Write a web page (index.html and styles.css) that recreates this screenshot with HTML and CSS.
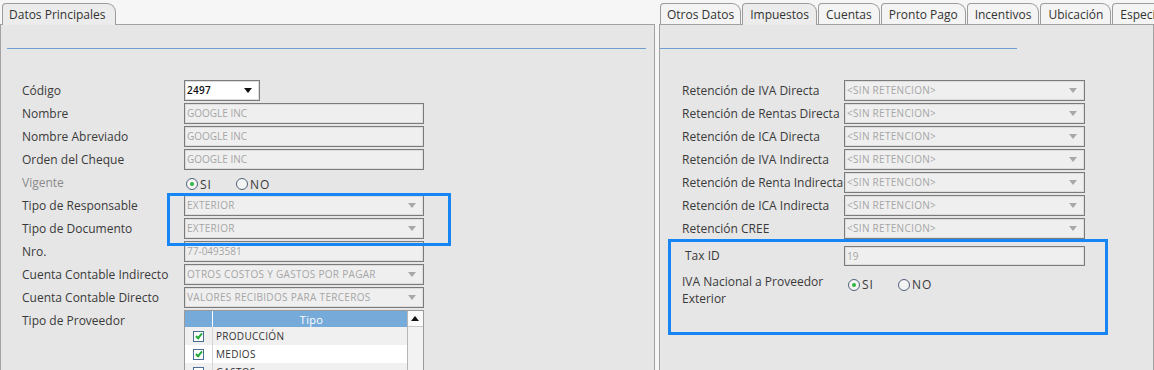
FILE: index.html
```html
<!DOCTYPE html>
<html lang="es">
<head>
  <meta charset="UTF-8">
  <title>Proveedor</title>
  <link rel="stylesheet" href="styles.css">
</head>
<body>
  <div class="window">

    <!-- Datos principales -->
    <div class="pane pane-left">
      <div class="tabs">
        <div class="tab active">Datos Principales</div>
      </div>
      <div class="panel">
        <div class="rule"></div>
        <div class="form">
          <label>Código</label>
          <div class="combo code"><span>2497</span><i class="arrow dark"></i></div>

          <label>Nombre</label>
          <div class="field">GOOGLE INC</div>

          <label>Nombre Abreviado</label>
          <div class="field">GOOGLE INC</div>

          <label>Orden del Cheque</label>
          <div class="field">GOOGLE INC</div>

          <label class="muted">Vigente</label>
          <div class="radios">
            <span class="radio checked"></span><span class="opt">SI</span>
            <span class="radio"></span><span class="opt">NO</span>
          </div>

          <label>Tipo de Responsable</label>
          <div class="combo"><span>EXTERIOR</span><i class="arrow"></i></div>

          <label>Tipo de Documento</label>
          <div class="combo"><span>EXTERIOR</span><i class="arrow"></i></div>

          <label>Nro.</label>
          <div class="field">77-0493581</div>

          <label>Cuenta Contable Indirecto</label>
          <div class="combo"><span>OTROS COSTOS Y GASTOS POR PAGAR</span><i class="arrow"></i></div>

          <label>Cuenta Contable Directo</label>
          <div class="combo"><span>VALORES RECIBIDOS PARA TERCEROS</span><i class="arrow"></i></div>

          <label class="top">Tipo de Proveedor</label>
          <div class="grid-table">
            <div class="table-body">
              <div class="trow head"><span class="chk-col"></span><span class="name-col">Tipo</span></div>
              <div class="trow"><span class="chk-col"><i class="check on"></i></span><span class="name-col">PRODUCCIÓN</span></div>
              <div class="trow alt"><span class="chk-col"><i class="check on"></i></span><span class="name-col">MEDIOS</span></div>
              <div class="trow"><span class="chk-col"><i class="check"></i></span><span class="name-col">GASTOS</span></div>
            </div>
            <div class="scrollbar"><span class="up"></span></div>
          </div>
        </div>
        <div class="mark mark-left"></div>
      </div>
    </div>

    <!-- Otros datos / Impuestos -->
    <div class="pane pane-right">
      <div class="tabs">
        <div class="tab">Otros Datos</div>
        <div class="tab active">Impuestos</div>
        <div class="tab">Cuentas</div>
        <div class="tab">Pronto Pago</div>
        <div class="tab">Incentivos</div>
        <div class="tab">Ubicación</div>
        <div class="tab">Especiales</div>
      </div>
      <div class="panel">
        <div class="rule short"></div>
        <div class="form tax">
          <label>Retención de IVA Directa</label>
          <div class="combo small"><span>&lt;SIN RETENCION&gt;</span><i class="arrow"></i></div>

          <label>Retención de Rentas Directa</label>
          <div class="combo small"><span>&lt;SIN RETENCION&gt;</span><i class="arrow"></i></div>

          <label>Retención de ICA Directa</label>
          <div class="combo small"><span>&lt;SIN RETENCION&gt;</span><i class="arrow"></i></div>

          <label>Retención de IVA Indirecta</label>
          <div class="combo small"><span>&lt;SIN RETENCION&gt;</span><i class="arrow"></i></div>

          <label>Retención de Renta Indirecta</label>
          <div class="combo small"><span>&lt;SIN RETENCION&gt;</span><i class="arrow"></i></div>

          <label>Retención de ICA Indirecta</label>
          <div class="combo small"><span>&lt;SIN RETENCION&gt;</span><i class="arrow"></i></div>

          <label>Retención CREE</label>
          <div class="combo small"><span>&lt;SIN RETENCION&gt;</span><i class="arrow"></i></div>
        </div>

        <div class="form tax extra">
          <label class="indent">Tax ID</label>
          <div class="field">19</div>

          <label class="top wrap">IVA Nacional a Proveedor Exterior</label>
          <div class="radios">
            <span class="radio checked"></span><span class="opt">SI</span>
            <span class="radio"></span><span class="opt">NO</span>
          </div>
        </div>
        <div class="mark mark-right"></div>
      </div>
    </div>

  </div>
</body>
</html>
```

FILE: styles.css
```css
html, body {
  margin: 0;
  height: 370px;
  overflow: hidden;
}
body {
  background: #f6f6f6;
  font-family: "Open Sans", "Noto Sans", sans-serif;
  font-size: 12px;
  color: #3a3a3a;
}
.window {
  display: flex;
  gap: 4px;
  height: 370px;
  overflow: hidden;
}
.pane {
  display: flex;
  flex-direction: column;
  overflow: hidden;
}
.pane-left {
  width: 655px;
  flex: none;
}
.pane-right {
  flex: 1;
  min-width: 0;
}

/* tabs */
.tabs {
  display: flex;
  height: 25px;
  padding-top: 3px;
  box-sizing: border-box;
  padding-left: 1px;
  white-space: nowrap;
  overflow: hidden;
  flex: none;
}
.pane-left .tabs {
  padding-left: 2px;
}
.tab {
  flex: none;
  padding: 0 7px;
  line-height: 21px;
  border: 1px solid #9c9c9c;
  border-bottom: none;
  border-radius: 4px 9px 0 0;
  background: #f4f4f4;
  color: #333;
  margin-right: 1px;
}
.tab:first-child {
  padding: 0 6px;
}
.tab.active {
  background: #ececec;
  position: relative;
  z-index: 1;
  height: 22px;
}
.pane-left .tab {
  width: 100px;
}

.panel {
  flex: 1;
  min-height: 0;
  position: relative;
  background: #e6e6e6;
  border: 1px solid #a2a2a2;
  border-bottom: none;
  margin-top: -1px;
  overflow: hidden;
}
.rule {
  height: 1px;
  background: #6e9fd0;
  margin: 23px 8px 0 6px;
}
.rule.short {
  width: 357px;
  margin-left: 0;
}

/* form grid */
.form {
  display: grid;
  grid-template-columns: 162px 240px;
  grid-auto-rows: 21px;
  row-gap: 2px;
  margin: 31px 0 0 21px;
  align-items: center;
}
.form label {
  align-self: center;
  white-space: nowrap;
}
.form label.top {
  align-self: start;
  padding-top: 2px;
}
.muted {
  color: #8a8a8a;
}
.field, .combo {
  height: 21px;
  box-sizing: border-box;
  border: 1px solid #7b7b7b;
  box-shadow: inset 0 0 0 1px #dcdcdc;
  background: #efefef;
  color: #a6a6a6;
  font-size: 10px;
  line-height: 19px;
  padding-left: 2px;
  white-space: nowrap;
  overflow: hidden;
}
.combo {
  display: flex;
  justify-content: space-between;
  align-items: center;
  letter-spacing: 0.3px;
}
.combo.code {
  width: 76px;
  background: #fff;
  color: #111;
  font-weight: 600;
}
.arrow {
  width: 0;
  height: 0;
  border-left: 4px solid transparent;
  border-right: 4px solid transparent;
  border-top: 5px solid #a8a8a8;
  margin-right: 7px;
}
.arrow.dark {
  border-top-color: #111;
}

/* radios */
.radios {
  display: flex;
  align-items: center;
  padding-left: 2px;
  padding-top: 3px;
}
.radio {
  width: 10px;
  height: 10px;
  border: 1px solid #50607a;
  border-radius: 50%;
  background: #f4f4f4;
  position: relative;
}
.radio.checked::after {
  content: "";
  position: absolute;
  left: 3px;
  top: 3px;
  width: 4px;
  height: 4px;
  border-radius: 50%;
  background: #2fb640;
}
.opt {
  margin-left: 2px;
  margin-right: 24px;
  letter-spacing: 1px;
}

/* tipo proveedor table */
.grid-table {
  align-self: start;
  display: flex;
  height: 60px;
  overflow: hidden;
  border: 1px solid #9a9a9a;
  border-bottom: none;
  background: #fff;
  box-sizing: border-box;
  width: 240px;
}
.table-body {
  flex: 1;
}
.trow {
  display: flex;
  height: 18px;
  align-items: center;
  font-size: 10px;
  letter-spacing: 0.3px;
  color: #333;
  background: #f0f0f0;
}
.trow.alt {
  background: #fff;
}
.trow.head {
  height: 16px;
  background: #76aad8;
  color: #fff;
  font-size: 11px;
}
.chk-col {
  width: 27px;
  height: 100%;
  border-right: 1px solid #d6d6d6;
  display: flex;
  justify-content: center;
  align-items: center;
}
.head .chk-col {
  border-right-color: #fff;
}
.name-col {
  padding-left: 3px;
}
.head .name-col {
  flex: 1;
  text-align: center;
}
.check {
  width: 9px;
  height: 9px;
  border: 1px solid #4a6f96;
  background: #fff;
  position: relative;
}
.check.on::after {
  content: "";
  position: absolute;
  left: 3px;
  top: 0;
  width: 2px;
  height: 5px;
  border: solid #23a83a;
  border-width: 0 2px 2px 0;
  transform: rotate(40deg);
}
.scrollbar {
  width: 15px;
  border-left: 1px solid #b5b5b5;
  background: #f2f2f2;
}
.scrollbar .up {
  display: block;
  height: 15px;
  border-bottom: 1px solid #c8c8c8;
  background: #fafafa;
  position: relative;
}
.scrollbar .up::after {
  content: "";
  position: absolute;
  left: 3px;
  top: 5px;
  border-left: 4px solid transparent;
  border-right: 4px solid transparent;
  border-bottom: 5px solid #111;
}

/* impuestos */
.form.tax {
  grid-template-columns: 162px 241px;
  margin-left: 22px;
}
.form.tax.extra {
  margin-top: 7px;
  grid-template-rows: 19px 21px;
  row-gap: 14px;
}
.form.tax.extra .field {
  height: 20px;
  line-height: 18px;
}
.form.tax.extra label.indent {
  padding-left: 3px;
}
.form label.wrap {
  white-space: normal;
  line-height: 17px;
  padding-top: 0;
  width: 160px;
  margin-top: -6px;
}
.form.tax.extra .radios {
  padding-left: 4px;
  padding-top: 0;
  margin-top: -3px;
  align-self: start;
}

/* highlight annotations laid over the form */
.mark {
  position: absolute;
  border: 3px solid #1786f5;
  box-sizing: border-box;
  pointer-events: none;
}
.mark-left {
  left: 166px;
  top: 168px;
  width: 284px;
  height: 53px;
}
.mark-right {
  left: 8px;
  top: 214px;
  width: 440px;
  height: 96px;
}
```
